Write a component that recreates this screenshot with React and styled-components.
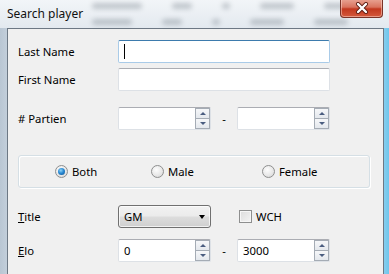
import React from 'react';
import styled, { createGlobalStyle } from 'styled-components';

const GlobalStyle = createGlobalStyle`
  html, body {
    margin: 0;
    padding: 0;
    overflow: hidden;
  }
  body {
    font-family: 'Noto Sans', 'Open Sans', sans-serif;
    font-size: 11.3px;
    color: #000;
  }
`;

const Window = styled.div`
  width: 389px;
  height: 274px;
  display: flex;
  flex-direction: column;
  background: linear-gradient(90deg, #b9c6d3 0%, #d8e2eb 6%, #e4ebf1 50%, #dde6ee 94%, #6fc6ec 100%);
  overflow: hidden;
`;

const TitleBar = styled.div`
  position: relative;
  height: 28px;
  flex: none;
  display: flex;
  align-items: center;
  padding-left: 7px;
  background: linear-gradient(180deg, #f2f5f8 0%, #e3e9ef 100%);
`;

const Ghosts = styled.div`
  position: absolute;
  left: 92px;
  top: ${(p) => p.$top}px;
  display: flex;
  gap: 30px;
  filter: blur(2.4px);
  opacity: 0.3;
`;

const Ghost = styled.div`
  width: ${(p) => p.$w}px;
  height: 6px;
  background: #55606c;
  border-radius: 3px;
`;

const Title = styled.span`
  position: relative;
  font-size: 12px;
  color: #111;
  margin-top: -2px;
`;

const CloseButton = styled.div`
  position: absolute;
  right: 6px;
  top: -1px;
  width: 41px;
  height: 18px;
  border: 1px solid #7a3328;
  border-top: none;
  border-radius: 0 0 4px 4px;
  background: linear-gradient(180deg, #e9a595 0%, #d9735e 45%, #c2381f 55%, #d4593c 100%);
  box-shadow: inset 0 0 0 1px rgba(255, 220, 210, 0.5);
  display: flex;
  align-items: center;
  justify-content: center;
`;

const Middle = styled.div`
  flex: 1;
  display: flex;
  padding: 0 6px 0 7px;
`;

const Client = styled.div`
  flex: 1;
  background: #f0f0f0;
  border: 1px solid #6d7884;
  border-bottom: none;
  padding: 11px 13px 0 10px;
  display: flex;
  flex-direction: column;
`;

const Row = styled.div`
  display: flex;
  align-items: center;
  height: ${(p) => p.$h || 23}px;
  margin-top: ${(p) => p.$top || 0}px;
`;

const Label = styled.div`
  width: 100px;
  flex: none;
`;

const TextBox = styled.div`
  box-sizing: border-box;
  width: ${(p) => p.$w}px;
  height: 23px;
  background: #fff;
  border: 1px solid ${(p) => (p.$focus ? '#a9cbe8' : '#dde1e6')};
  border-top-color: ${(p) => (p.$focus ? '#3d7bad' : '#abadb3')};
  border-radius: 2px;
  display: flex;
  align-items: center;
  padding-left: 5px;
  position: relative;
`;

const Caret = styled.span`
  width: 1px;
  height: 15px;
  background: #000;
`;

const SpinCol = styled.div`
  margin-left: auto;
  align-self: stretch;
  width: 15px;
  display: flex;
  flex-direction: column;
`;

const SpinBtn = styled.div`
  flex: 1;
  box-sizing: border-box;
  border: 1px solid #a5acb5;
  background: linear-gradient(180deg, #f6f7f9 0%, #e4e8ed 100%);
  display: flex;
  align-items: center;
  justify-content: center;
  & + & {
    border-top: none;
  }
`;

const Arrow = styled.span`
  width: 0;
  height: 0;
  border-left: 3px solid transparent;
  border-right: 3px solid transparent;
  ${(p) =>
    p.$up ? 'border-bottom: 3px solid #4a5d80;' : 'border-top: 3px solid #4a5d80;'}
`;

const Dash = styled.div`
  width: 26px;
  text-align: center;
  flex: none;
`;

const GroupBox = styled.div`
  box-sizing: border-box;
  width: 352px;
  height: 33px;
  margin-top: 25px;
  border: 1px solid #d5dfe5;
  border-radius: 3px;
  box-shadow: inset 1px 1px 0 #fff, 1px 1px 0 #fff;
  display: flex;
  align-items: center;
  padding-left: 36px;
`;

const RadioItem = styled.div`
  width: ${(p) => p.$w}px;
  display: flex;
  align-items: center;
  gap: 4px;
`;

const RadioCircle = styled.span`
  box-sizing: border-box;
  width: 13px;
  height: 13px;
  border-radius: 50%;
  border: 1px solid #8e8f8f;
  background: radial-gradient(circle at 40% 35%, #fdfdfd 0%, #e6e6e6 60%, #cfcfcf 100%);
  display: flex;
  align-items: center;
  justify-content: center;
`;

const RadioDot = styled.span`
  width: 7px;
  height: 7px;
  border-radius: 50%;
  background: radial-gradient(circle at 40% 35%, #8fd3f5 0%, #2a8ad4 45%, #0c4f8c 100%);
`;

const Combo = styled.div`
  box-sizing: border-box;
  width: 93px;
  height: 23px;
  border: 1px solid #707070;
  border-radius: 3px;
  background: linear-gradient(180deg, #f2f2f2 0%, #ebebeb 48%, #dddddd 52%, #cfcfcf 100%);
  box-shadow: inset 0 0 0 1px rgba(255, 255, 255, 0.7);
  display: flex;
  align-items: center;
  padding: 0 5px 0 5px;
`;

const ComboArrow = styled.span`
  margin-left: auto;
  width: 0;
  height: 0;
  border-left: 3.5px solid transparent;
  border-right: 3.5px solid transparent;
  border-top: 4px solid #000;
`;

const CheckLabel = styled.div`
  display: flex;
  align-items: center;
  gap: 4px;
  margin-left: 28px;
`;

const CheckBox = styled.span`
  box-sizing: border-box;
  width: 13px;
  height: 13px;
  border: 1px solid #8e8f8f;
  background: linear-gradient(135deg, #dcdcdc 0%, #f4f4f4 100%);
  box-shadow: inset 0 0 0 1px #f6f6f6;
`;

function Spin({ value }) {
  return (
    <TextBox $w={93}>
      {value}
      <SpinCol>
        <SpinBtn>
          <Arrow $up />
        </SpinBtn>
        <SpinBtn>
          <Arrow />
        </SpinBtn>
      </SpinCol>
    </TextBox>
  );
}

function Radio({ label, checked, w }) {
  return (
    <RadioItem $w={w}>
      <RadioCircle>{checked && <RadioDot />}</RadioCircle>
      {label}
    </RadioItem>
  );
}

export default function App() {
  return (
    <>
      <GlobalStyle />
      <Window>
        <TitleBar>
          <Ghosts $top={3}>
            <Ghost $w={50} />
            <Ghost $w={20} />
            <Ghost $w={8} />
            <Ghost $w={34} />
            <Ghost $w={26} />
          </Ghosts>
          <Ghosts $top={19}>
            <Ghost $w={40} />
            <Ghost $w={20} />
            <Ghost $w={8} />
            <Ghost $w={34} />
            <Ghost $w={34} />
          </Ghosts>
          <Title>Search player</Title>
          <CloseButton>
            <svg width="14" height="12" viewBox="0 0 14 12">
              <path
                d="M3 2 L11 10 M11 2 L3 10"
                stroke="#5a1a10"
                strokeWidth="4"
                strokeLinecap="round"
              />
              <path
                d="M3 2 L11 10 M11 2 L3 10"
                stroke="#fff"
                strokeWidth="2.4"
                strokeLinecap="round"
              />
            </svg>
          </CloseButton>
        </TitleBar>
        <Middle>
          <Client>
            <Row>
              <Label>Last Name</Label>
              <TextBox $w={212} $focus>
                <Caret />
              </TextBox>
            </Row>
            <Row $top={5}>
              <Label>First Name</Label>
              <TextBox $w={212} />
            </Row>
            <Row $top={16}>
              <Label># Partien</Label>
              <Spin />
              <Dash>-</Dash>
              <Spin />
            </Row>
            <GroupBox>
              <Radio label="Both" checked w={96} />
              <Radio label="Male" w={111} />
              <Radio label="Female" w={80} />
            </GroupBox>
            <Row $top={17}>
              <Label>
                <u>T</u>itle
              </Label>
              <Combo>
                GM
                <ComboArrow />
              </Combo>
              <CheckLabel>
                <CheckBox />
                WCH
              </CheckLabel>
            </Row>
            <Row $top={11}>
              <Label>
                <u>E</u>lo
              </Label>
              <Spin value="0" />
              <Dash>-</Dash>
              <Spin value="3000" />
            </Row>
          </Client>
        </Middle>
      </Window>
    </>
  );
}
